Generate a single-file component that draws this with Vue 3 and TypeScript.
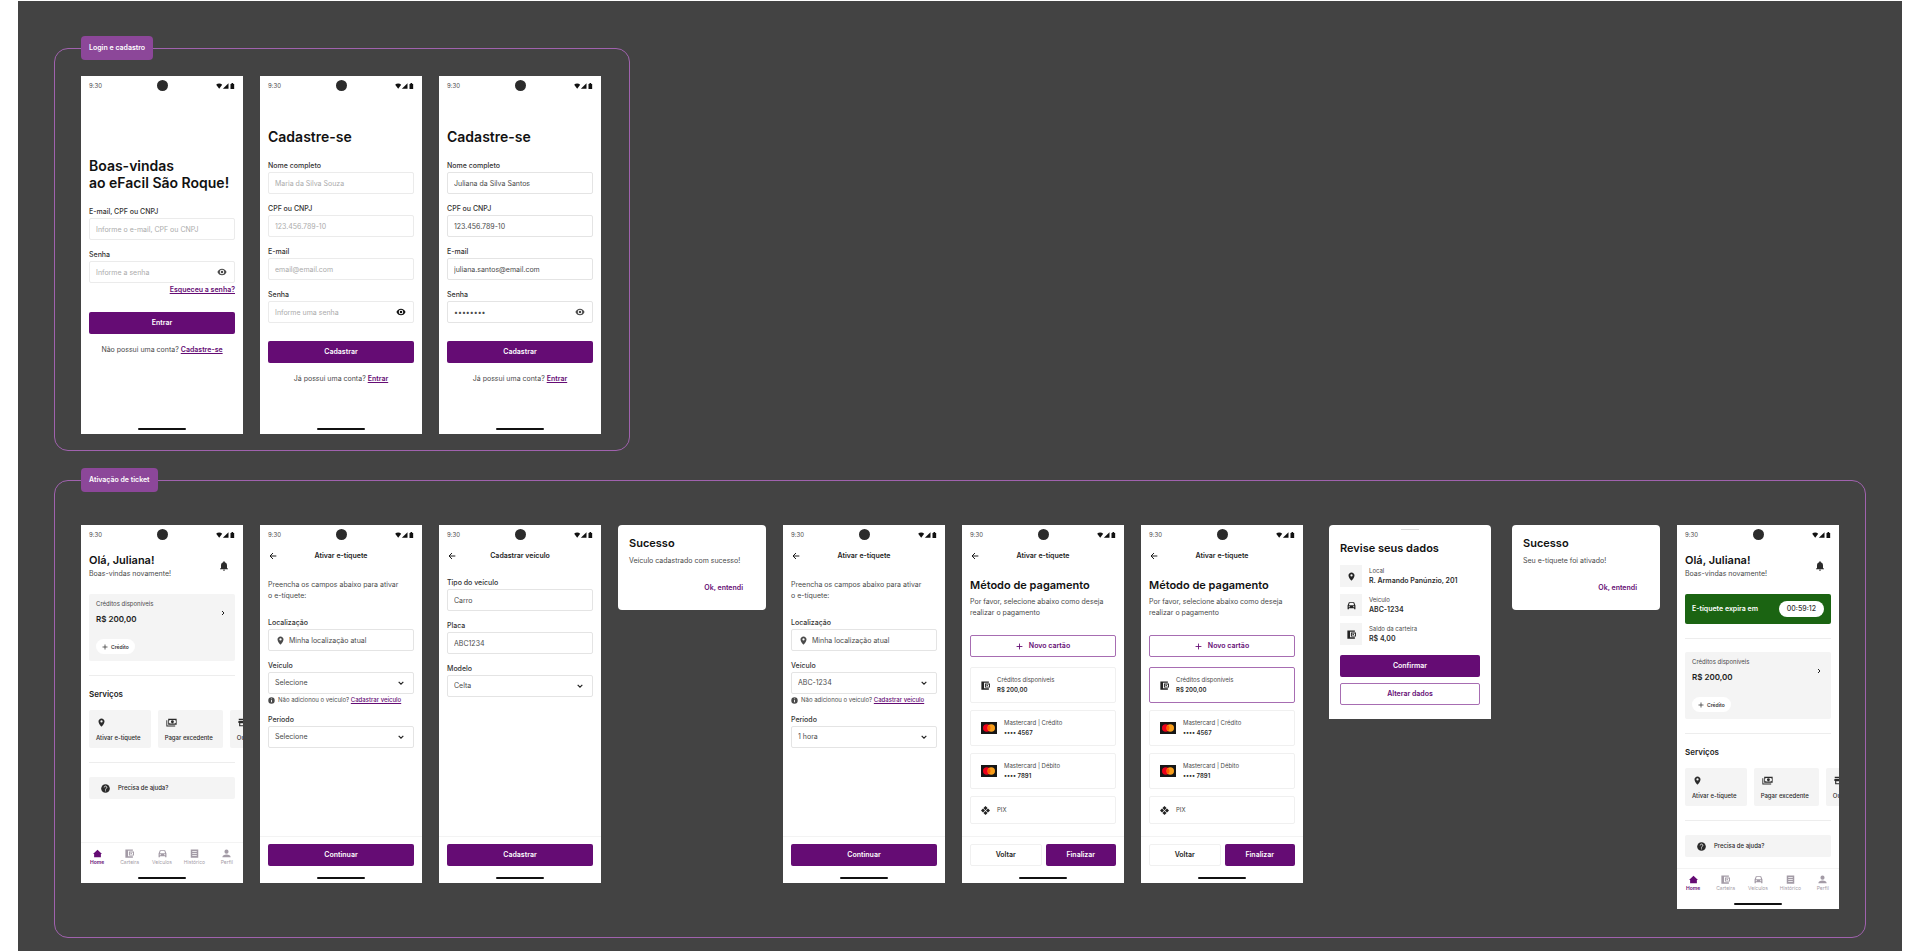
<script setup lang="ts">
interface Field {
  label: string
  value?: string
  placeholder?: string
  kind?: 'text' | 'password' | 'select'
  icon?: string
  hint?: boolean
  soft?: boolean
  darkEye?: boolean
}

interface Auth {
  lines: string[]
  fields: Field[]
  forgot?: boolean
  action: string
  question: string
  link: string
}

interface Screen {
  kind: 'auth' | 'home' | 'form' | 'payment' | 'dialog' | 'sheet'
  title?: string
  intro?: string[]
  fields?: Field[]
  action?: string
  auth?: Auth
  message?: string
  timer?: string
  selected?: boolean
}

interface Group {
  name: string
  size: 'narrow' | 'wide'
  screens: Screen[]
}

const location: Field = { label: 'Localização', value: 'Minha localização atual', icon: 'pin' }
const intro = ['Preencha os campos abaixo para ativar', 'o e-tíquete:']

const groups: Group[] = [
  {
    name: 'Login e cadastro',
    size: 'narrow',
    screens: [
      {
        kind: 'auth',
        auth: {
          lines: ['Boas-vindas', 'ao eFacil São Roque!'],
          fields: [
            { label: 'E-mail, CPF ou CNPJ', placeholder: 'Informe o e-mail, CPF ou CNPJ', soft: true },
            { label: 'Senha', placeholder: 'Informe a senha', kind: 'password', soft: true },
          ],
          forgot: true,
          action: 'Entrar',
          question: 'Não possui uma conta?',
          link: 'Cadastre-se',
        },
      },
      {
        kind: 'auth',
        auth: {
          lines: ['Cadastre-se'],
          fields: [
            { label: 'Nome completo', placeholder: 'Maria da Silva Souza', soft: true },
            { label: 'CPF ou CNPJ', placeholder: '123.456.789-10', soft: true },
            { label: 'E-mail', placeholder: 'email@email.com', soft: true },
            { label: 'Senha', placeholder: 'Informe uma senha', kind: 'password', soft: true, darkEye: true },
          ],
          action: 'Cadastrar',
          question: 'Já possui uma conta?',
          link: 'Entrar',
        },
      },
      {
        kind: 'auth',
        auth: {
          lines: ['Cadastre-se'],
          fields: [
            { label: 'Nome completo', value: 'Juliana da Silva Santos' },
            { label: 'CPF ou CNPJ', value: '123.456.789-10' },
            { label: 'E-mail', value: 'juliana.santos@email.com' },
            { label: 'Senha', value: 'saoroque', kind: 'password' },
          ],
          action: 'Cadastrar',
          question: 'Já possui uma conta?',
          link: 'Entrar',
        },
      },
    ],
  },
  {
    name: 'Ativação de ticket',
    size: 'wide',
    screens: [
      { kind: 'home' },
      {
        kind: 'form',
        title: 'Ativar e-tíquete',
        intro,
        fields: [
          location,
          { label: 'Veículo', value: 'Selecione', kind: 'select', hint: true },
          { label: 'Período', value: 'Selecione', kind: 'select' },
        ],
        action: 'Continuar',
      },
      {
        kind: 'form',
        title: 'Cadastrar veículo',
        fields: [
          { label: 'Tipo do veículo', value: 'Carro' },
          { label: 'Placa', value: 'ABC1234' },
          { label: 'Modelo', value: 'Celta', kind: 'select' },
        ],
        action: 'Cadastrar',
      },
      { kind: 'dialog', title: 'Sucesso', message: 'Veículo cadastrado com sucesso!' },
      {
        kind: 'form',
        title: 'Ativar e-tíquete',
        intro,
        fields: [
          location,
          { label: 'Veículo', value: 'ABC-1234', kind: 'select', hint: true },
          { label: 'Período', value: '1 hora', kind: 'select' },
        ],
        action: 'Continuar',
      },
      { kind: 'payment', title: 'Ativar e-tíquete' },
      { kind: 'payment', title: 'Ativar e-tíquete', selected: true },
      { kind: 'sheet', title: 'Revise seus dados' },
      { kind: 'dialog', title: 'Sucesso', message: 'Seu e-tíquete foi ativado!' },
      { kind: 'home', timer: '00:59:12' },
    ],
  },
]

const services = [
  { icon: 'pin', label: 'Ativar e-tíquete' },
  { icon: 'cash', label: 'Pagar excedente' },
  { icon: 'store', label: 'Outros' },
]

const tabs = [
  { icon: 'home', label: 'Home' },
  { icon: 'wallet', label: 'Carteira' },
  { icon: 'car', label: 'Veículos' },
  { icon: 'receipt', label: 'Histórico' },
  { icon: 'person', label: 'Perfil' },
]

const methods = [
  { icon: 'wallet', name: 'Créditos disponíveis', detail: 'R$ 200,00' },
  { icon: 'mastercard', name: 'Mastercard | Crédito', detail: '•••• 4567' },
  { icon: 'mastercard', name: 'Mastercard | Débito', detail: '•••• 7891' },
  { icon: 'pix', name: 'PIX', detail: '' },
]

const review = [
  { icon: 'pin', name: 'Local', detail: 'R. Armando Panúnzio, 201' },
  { icon: 'car', name: 'Veículo', detail: 'ABC-1234' },
  { icon: 'wallet', name: 'Saldo da carteira', detail: 'R$ 4,00' },
]

const isPhone = (s: Screen) => s.kind !== 'dialog' && s.kind !== 'sheet'
const fieldsOf = (s: Screen): Field[] => s.auth?.fields ?? s.fields ?? []
</script>

<template>
  <svg class="sprite" aria-hidden="true">
    <symbol id="eye" viewBox="0 0 24 24"><path d="M12 4C7 4 2.700 7.300 1 12c1.700 4.700 6 8 11 8s9.300-3.300 11-8c-1.700-4.700-6-8-11-8zm0 13.500a5.500 5.500 0 1 1 0-11 5.500 5.500 0 0 1 0 11zm0-8.500a3 3 0 1 0 0 6 3 3 0 0 0 0-6z" fill-rule="evenodd" /></symbol>
    <symbol id="pin" viewBox="0 0 24 24"><path d="M12 1C7.600 1 4 4.600 4 9c0 6 8 14 8 14s8-8 8-14c0-4.400-3.600-8-8-8zm0 11a3 3 0 1 1 0-6 3 3 0 0 1 0 6z" fill-rule="evenodd" /></symbol>
    <symbol id="chevron-down" viewBox="0 0 24 24"><path d="M5 8.500l7 7 7-7" fill="none" stroke="currentColor" stroke-width="3.500" /></symbol>
    <symbol id="chevron-right" viewBox="0 0 24 24"><path d="M8 4l8 8-8 8" fill="none" stroke="currentColor" stroke-width="4" /></symbol>
    <symbol id="back" viewBox="0 0 24 24"><path d="M22 12H4M12 3l-9 9 9 9" fill="none" stroke="currentColor" stroke-width="3" /></symbol>
    <symbol id="plus" viewBox="0 0 24 24"><path d="M12 2v20M2 12h20" fill="none" stroke="currentColor" stroke-width="3" /></symbol>
    <symbol id="bell" viewBox="0 0 20 24"><path d="M10 24a2.600 2.600 0 0 0 2.600-2.600H7.400A2.600 2.600 0 0 0 10 24zm7.500-7V10.500c0-3.900-2.100-6.800-5.500-7.700V2a2 2 0 0 0-4 0v.8C4.600 3.700 2.500 6.600 2.500 10.500V17L0 19v1h20v-1z" /></symbol>
    <symbol id="info" viewBox="0 0 24 24"><path d="M12 1a11 11 0 1 0 0 22 11 11 0 0 0 0-22zm1.500 17h-3v-8h3zm0-10h-3V5h3z" fill-rule="evenodd" /></symbol>
    <symbol id="help" viewBox="0 0 24 24"><circle cx="12" cy="12" r="11.500" /><path d="M8.500 9a3.500 3.500 0 1 1 5.500 3c-1.300.9-2 1.400-2 3M12 17v2.500" fill="none" stroke="#fff" stroke-width="2.200" /></symbol>
    <symbol id="cash" viewBox="0 0 30 24"><path d="M6 2h23v16H6zm4 3a3 3 0 0 1-2 2v6a3 3 0 0 1 2 2h15a3 3 0 0 1 2-2V7a3 3 0 0 1-2-2zM17.500 6a4 4 0 1 1 0 8 4 4 0 0 1 0-8z" fill-rule="evenodd" /><path d="M1 6h2.500v14.500H25V23H1z" /></symbol>
    <symbol id="store" viewBox="0 0 24 24"><path d="M2 2h20v4H2zM1 8h22v5h-2v9H3v-9H1zm5 6v5h8v-5z" fill-rule="evenodd" /></symbol>
    <symbol id="home" viewBox="0 0 24 24"><path d="M12 2L0 13h3v9h18v-9h3z" /></symbol>
    <symbol id="wallet" viewBox="0 0 24 24"><path d="M1 1h20v3.500H8v15h13V23H1z" /><path d="M10.500 6.500H24v11H10.500zM13 9v6h8.500V9z" fill-rule="evenodd" /><circle cx="16.500" cy="12" r="2" /></symbol>
    <symbol id="car" viewBox="0 0 24 24"><path d="M5 3h14l3.500 9v10H19v-3H5v3H1.500V12zM7 5.500L5 11h14l-2-5.500zM6 13.500a1.600 1.600 0 1 0 0 3.200 1.600 1.600 0 0 0 0-3.200zm12 0a1.600 1.600 0 1 0 0 3.200 1.600 1.600 0 0 0 0-3.200z" fill-rule="evenodd" /></symbol>
    <symbol id="receipt" viewBox="0 0 24 24"><path d="M2 1h20v22H2zm4 5v2h12V6zm0 5v2h12v-2zm0 5v2h12v-2z" fill-rule="evenodd" /></symbol>
    <symbol id="person" viewBox="0 0 24 24"><circle cx="12" cy="7" r="5.500" /><path d="M1 22c0-5 5-7.500 11-7.500S23 17 23 22z" /></symbol>
    <symbol id="pix" viewBox="0 0 24 24"><path d="M12 0l5.500 5.500L12 11 6.500 5.500zM12 13l5.500 5.500L12 24l-5.500-5.500zM5.300 6.700l5.400 5.300-5.400 5.300L0 12zM18.700 6.700L24 12l-5.300 5.300-5.400-5.300z" /></symbol>
    <symbol id="mastercard" viewBox="0 0 32 24"><rect width="32" height="24" fill="#161616" /><circle cx="11.500" cy="12" r="7.500" fill="#eb001b" /><circle cx="20.500" cy="12" r="7.500" fill="#f79e1b" /><path d="M16 6a7.500 7.500 0 0 1 0 12 7.500 7.500 0 0 1 0-12z" fill="#ff5f00" /></symbol>
    <symbol id="signals" viewBox="0 0 56 18"><path d="M9 17L0 5C5 0 13 0 18 5z" /><path d="M37 1v16H20z" /><path d="M43 3h3V0h5v3h3v15H43z" /></symbol>
  </svg>

  <main class="page">
    <div class="board">
      <section v-for="(group, g) in groups" :key="group.name" class="group" :class="group.size">
        <h2 class="tag">{{ group.name }}</h2>
        <div class="screens">
          <article
            v-for="(screen, s) in group.screens"
            :key="s"
            class="screen"
            :class="[screen.kind, { phone: isPhone(screen) }]"
          >
            <header v-if="isPhone(screen)" class="status">
              <span class="clock">9:30</span>
              <span class="camera"></span>
              <svg class="signals"><use href="#signals" /></svg>
            </header>

            <div v-if="screen.kind === 'form' || screen.kind === 'payment'" class="appbar">
              <button class="icon-button" type="button" aria-label="Voltar">
                <svg class="i8"><use href="#back" /></svg>
              </button>
              <h3>{{ screen.title }}</h3>
            </div>

            <form
              v-if="screen.kind === 'auth' || screen.kind === 'form'"
              class="content"
              :class="{ tall: screen.auth?.forgot, plain: screen.kind === 'form' && !screen.intro }"
              @submit.prevent
            >
              <h1 v-if="screen.auth" class="headline">
                <span v-for="line in screen.auth.lines" :key="line">{{ line }}</span>
              </h1>
              <p v-if="screen.intro" class="copy">
                <span v-for="line in screen.intro" :key="line">{{ line }}</span>
              </p>

              <div class="fields">
                <div v-for="(field, f) in fieldsOf(screen)" :key="field.label" class="field">
                  <label :for="`f-${g}-${s}-${f}`">{{ field.label }}</label>
                  <div class="box" :class="{ soft: field.soft }">
                    <svg v-if="field.icon" class="i9 lead"><use :href="`#${field.icon}`" /></svg>
                    <select v-if="field.kind === 'select'" :id="`f-${g}-${s}-${f}`">
                      <option>{{ field.value }}</option>
                    </select>
                    <input
                      v-else
                      :id="`f-${g}-${s}-${f}`"
                      :type="field.kind ?? 'text'"
                      :value="field.value"
                      :placeholder="field.placeholder"
                      autocomplete="off"
                    />
                    <svg v-if="field.kind === 'select'" class="i8 arrow"><use href="#chevron-down" /></svg>
                    <button
                      v-if="field.kind === 'password'"
                      class="icon-button eye"
                      :class="{ dark: field.darkEye }"
                      type="button"
                      aria-label="Mostrar senha"
                    >
                      <svg class="i10"><use href="#eye" /></svg>
                    </button>
                  </div>
                  <p v-if="field.hint" class="hint">
                    <svg class="i7"><use href="#info" /></svg>
                    <span>Não adicionou o veículo? <a href="#cadastrar">Cadastrar veículo</a></span>
                  </p>
                </div>
              </div>

              <a v-if="screen.auth?.forgot" class="forgot" href="#senha">Esqueceu a senha?</a>
              <template v-if="screen.auth">
                <button class="btn solid submit" type="submit">{{ screen.auth.action }}</button>
                <p class="switch">
                  {{ screen.auth.question }} <a href="#conta">{{ screen.auth.link }}</a>
                </p>
              </template>
            </form>

            <div v-if="screen.kind === 'home'" class="content">
              <div class="greeting">
                <div>
                  <h3 class="title">Olá, Juliana!</h3>
                  <p>Boas-vindas novamente!</p>
                </div>
                <button class="icon-button" type="button" aria-label="Notificações">
                  <svg class="bell"><use href="#bell" /></svg>
                </button>
              </div>
              <template v-if="screen.timer">
                <div class="expiry">
                  <span>E-tíquete expira em</span>
                  <time>{{ screen.timer }}</time>
                </div>
                <hr class="above" />
              </template>
              <div class="credit">
                <div>
                  <p class="small">Créditos disponíveis</p>
                  <p class="amount">R$ 200,00</p>
                  <button class="pill" type="button">
                    <svg class="i6"><use href="#plus" /></svg>Crédito
                  </button>
                </div>
                <svg class="i6 go"><use href="#chevron-right" /></svg>
              </div>
              <hr />
              <h4>Serviços</h4>
              <div class="services">
                <button v-for="service in services" :key="service.label" class="service" type="button">
                  <svg :class="service.icon === 'cash' ? 'wide-icon' : 'i9'"><use :href="`#${service.icon}`" /></svg>
                  <span>{{ service.label }}</span>
                </button>
              </div>
              <hr />
              <button class="assist" type="button">
                <svg class="i9"><use href="#help" /></svg>Precisa de ajuda?
              </button>
            </div>

            <nav v-if="screen.kind === 'home'" class="tabs">
              <a v-for="(tab, t) in tabs" :key="tab.label" :href="`#${tab.label}`" :class="{ active: t === 0 }">
                <svg class="i9"><use :href="`#${tab.icon}`" /></svg>
                <span>{{ tab.label }}</span>
              </a>
            </nav>

            <div v-if="screen.kind === 'payment'" class="content">
              <h3 class="title">Método de pagamento</h3>
              <p class="copy lead-in">
                <span>Por favor, selecione abaixo como deseja</span>
                <span>realizar o pagamento</span>
              </p>
              <button class="btn outline" type="button">
                <svg class="i7"><use href="#plus" /></svg>Novo cartão
              </button>
              <div class="methods">
                <button
                  v-for="(method, m) in methods"
                  :key="method.name"
                  class="method"
                  :class="{ chosen: screen.selected && m === 0, short: !method.detail }"
                  type="button"
                >
                  <svg :class="method.icon === 'mastercard' ? 'brand' : 'i9'"><use :href="`#${method.icon}`" /></svg>
                  <span class="lines">
                    <span>{{ method.name }}</span>
                    <b v-if="method.detail">{{ method.detail }}</b>
                  </span>
                </button>
              </div>
            </div>

            <footer v-if="screen.kind === 'form'" class="actions">
              <button class="btn solid" type="button">{{ screen.action }}</button>
            </footer>
            <footer v-if="screen.kind === 'payment'" class="actions">
              <button class="btn ghost" type="button">Voltar</button>
              <button class="btn solid" type="button">Finalizar</button>
            </footer>

            <div v-if="isPhone(screen)" class="home-indicator"><span></span></div>

            <template v-if="screen.kind === 'dialog'">
              <h3 class="title">{{ screen.title }}</h3>
              <p class="message">{{ screen.message }}</p>
              <button class="text-button" type="button">Ok, entendi</button>
            </template>

            <template v-if="screen.kind === 'sheet'">
              <span class="handle"></span>
              <h3 class="title">{{ screen.title }}</h3>
              <ul class="review">
                <li v-for="item in review" :key="item.name">
                  <span class="tile"><svg class="i9"><use :href="`#${item.icon}`" /></svg></span>
                  <span class="lines">
                    <span>{{ item.name }}</span>
                    <b>{{ item.detail }}</b>
                  </span>
                </li>
              </ul>
              <button class="btn solid" type="button">Confirmar</button>
              <button class="btn outline second" type="button">Alterar dados</button>
            </template>
          </article>
        </div>
      </section>
    </div>
  </main>
</template>

<style>
body {
  margin: 0;
  background: #fff;
}
</style>

<style scoped>
.page,
.page * {
  box-sizing: border-box;
}

h1,
h2,
h3,
h4,
p,
ul {
  margin: 0;
  padding: 0;
}

button,
input,
select {
  margin: 0;
  padding: 0;
  border: 0;
  background: none;
  font: inherit;
  color: inherit;
}

button,
a {
  cursor: pointer;
}

a {
  color: var(--purple);
  text-decoration: underline;
  text-underline-offset: 1px;
  text-decoration-thickness: 1px;
}

svg {
  display: block;
  flex: none;
  fill: currentColor;
}

hr {
  height: 1px;
  margin: 14px 0 0;
  border: 0;
  background: #ededed;
}

.sprite {
  position: absolute;
  width: 0;
  height: 0;
}

.page {
  --purple: #650c74;
  --ink: #1d1d1d;
  --text: #4a4a4a;
  --line: #ebebeb;
  display: flex;
  min-height: 100vh;
  padding: 1px 18px 0;
  font-family: Inter, "Liberation Sans", sans-serif;
  font-size: 7px;
  line-height: 10px;
  color: var(--text);
}

.i6 { width: 6px; height: 6px; }
.i7 { width: 7px; height: 7px; }
.i8 { width: 8px; height: 8px; }
.i9 { width: 9px; height: 9px; }
.i10 { width: 10px; height: 10px; }

.board {
  flex: 1;
  display: flex;
  flex-direction: column;
  align-items: flex-start;
  gap: 29px;
  padding: 47px 36px 12px;
  background: #434343;
}

.group {
  position: relative;
  border: 1px solid #a062ae;
  border-radius: 14px;
  padding: 27px 26px 16px;
}

.narrow {
  width: 30vw;
  padding-right: 28px;
}

.wide {
  width: 100%;
  padding-top: 44px;
  padding-bottom: 28px;
}

.tag {
  position: absolute;
  top: -13px;
  left: 26px;
  padding: 7px 8px;
  border-radius: 4px;
  background: #8c4799;
  color: #fff;
  font-size: 7px;
  font-weight: 600;
  line-height: 10px;
}

.screens {
  display: grid;
  align-items: start;
  column-gap: 17px;
}

.narrow .screens {
  grid-template-columns: repeat(3, minmax(0, 1fr));
}

.wide .screens {
  grid-template-columns:
    repeat(3, minmax(0, 162fr)) minmax(0, 148fr) repeat(3, minmax(0, 162fr))
    minmax(0, 175fr) minmax(0, 148fr) minmax(0, 162fr);
}

.screen {
  min-width: 0;
  display: flex;
  flex-direction: column;
  background: #fff;
}

.phone {
  min-height: 358px;
  overflow: hidden;
}

.status {
  display: grid;
  grid-template-columns: 1fr auto 1fr;
  align-items: center;
  height: 19px;
  padding: 0 8px;
}

.clock {
  font-size: 6px;
}

.camera {
  width: 11px;
  height: 11px;
  border-radius: 50%;
  background: #2b2b2b;
}

.signals {
  justify-self: end;
  width: 19px;
  height: 6px;
  color: #111;
}

.content {
  padding: 0 8px;
}

.auth .content {
  padding-top: 33px;
}

.auth .tall {
  padding-top: 62px;
}

.headline {
  font-size: 14px;
  font-weight: 600;
  line-height: 17px;
  color: #111;
  white-space: nowrap;
}

.headline span,
.copy span {
  display: block;
}

.title {
  font-size: 11px;
  font-weight: 600;
  line-height: 14px;
  color: #111;
  white-space: nowrap;
}

.fields {
  display: grid;
  gap: 10px;
}

.auth .fields {
  margin-top: 16px;
}

.copy + .fields {
  margin-top: 17px;
}

.field label {
  display: block;
  margin-bottom: 1px;
  color: #333;
  font-weight: 500;
}

.box {
  display: flex;
  align-items: center;
  height: 22px;
  padding: 0 7px 0 6px;
  border: 1px solid #e4e4e4;
  border-radius: 2px;
}

.soft {
  border-color: var(--line);
}

.box input,
.box select {
  flex: 1;
  min-width: 0;
  height: 20px;
  appearance: none;
  outline-offset: -1px;
}

.box input::placeholder {
  color: #ababab;
  opacity: 1;
}

.lead {
  margin: 0 4px 0 1px;
}

.arrow {
  margin-right: 1px;
  color: #222;
  pointer-events: none;
}

.eye.dark {
  color: #111;
}

.hint {
  display: flex;
  align-items: center;
  gap: 3px;
  margin-top: 1px;
  font-size: 6px;
  line-height: 10px;
  white-space: nowrap;
}

.switch a,
.forgot {
  font-weight: 600;
}

.hint a {
  font-weight: 500;
}

.forgot {
  display: block;
  width: fit-content;
  margin: 2px 0 0 auto;
}

.btn {
  display: flex;
  align-items: center;
  justify-content: center;
  gap: 6px;
  width: 100%;
  height: 22px;
  border-radius: 2px;
  font-weight: 600;
}

.solid {
  background: var(--purple);
  color: #fff;
}

.outline {
  border: 1px solid #a76db2;
  color: var(--purple);
}

.ghost {
  border: 1px solid #f0f0f0;
  color: var(--ink);
}

.submit {
  margin-top: 18px;
}

.forgot + .submit {
  margin-top: 17px;
}

.switch {
  margin-top: 11px;
  text-align: center;
}

.home-indicator {
  display: flex;
  align-items: flex-end;
  justify-content: center;
  height: 17px;
  padding-bottom: 4px;
}

.home-indicator span {
  width: 48px;
  height: 2px;
  border-radius: 1px;
  background: #111;
}

.auth .home-indicator {
  margin-top: auto;
}

.appbar {
  display: grid;
  grid-template-columns: 8px 1fr 8px;
  align-items: center;
  height: 23px;
  padding: 0 9px;
  color: var(--ink);
}

.appbar h3 {
  font-size: 7px;
  font-weight: 600;
  text-align: center;
}

.copy {
  line-height: 11px;
  white-space: nowrap;
}

.form .content {
  padding-top: 12px;
}

.form .plain {
  padding-top: 11px;
}

.actions,
.tabs {
  display: flex;
  gap: 4px;
  margin-top: auto;
  border-top: 1px solid #f3f3f3;
  padding: 7px 8px 0;
}

.greeting {
  display: flex;
  align-items: center;
  justify-content: space-between;
  padding: 9px 7px 0 0;
}

.greeting p {
  margin-top: 2px;
}

.bell {
  width: 8px;
  height: 10px;
  color: #2b2b2b;
}

.expiry {
  display: flex;
  align-items: center;
  justify-content: space-between;
  height: 30px;
  margin-top: 15px;
  padding: 0 7px;
  border-radius: 2px;
  background: #1b6412;
  color: #fff;
  font-weight: 600;
}

.expiry time {
  padding: 3px 8px;
  border-radius: 8px;
  background: #fff;
  color: #333;
  font-weight: 500;
}

.credit {
  display: flex;
  justify-content: space-between;
  margin-top: 15px;
  padding: 6px 9px 7px 7px;
  border-radius: 2px;
  background: #f4f4f4;
}

.above + .credit {
  margin-top: 13px;
}

.small {
  font-size: 6px;
  line-height: 8px;
}

.amount {
  margin: 6px 0 14px;
  font-size: 8px;
  font-weight: 600;
  line-height: 11px;
  color: var(--ink);
}

.pill {
  display: flex;
  align-items: center;
  gap: 3px;
  height: 15px;
  padding: 0 6px;
  border-radius: 8px;
  background: #fff;
  color: #333;
  font-size: 5px;
  font-weight: 600;
}

.go {
  margin-top: 10px;
  color: #222;
}

h4 {
  margin: 13px 0 10px;
  font-size: 8px;
  font-weight: 600;
  line-height: 11px;
  color: var(--ink);
}

.services {
  display: flex;
  gap: 7px;
}

.service {
  flex: none;
  height: 38px;
  padding: 8px 10px 6px 7px;
  border-radius: 2px;
  background: #f4f4f4;
  color: #2b2b2b;
  font-size: 6px;
  font-weight: 500;
  line-height: 8px;
  text-align: left;
}

.service svg {
  margin: 0 0 7px 1px;
}

.wide-icon {
  width: 11px;
  height: 9px;
}

.assist {
  display: flex;
  align-items: center;
  gap: 8px;
  width: 100%;
  height: 22px;
  margin: 14px 0 11px;
  padding: 0 12px;
  border-radius: 2px;
  background: #f4f4f4;
  color: #2b2b2b;
  font-size: 6px;
  font-weight: 500;
}

.tabs {
  gap: 0;
  padding: 6px 0 0;
}

.tabs a {
  flex: 1 1 0;
  min-width: 0;
  display: flex;
  flex-direction: column;
  align-items: center;
  font-size: 5px;
  line-height: 8px;
  color: #a39ba6;
  text-decoration: none;
}

.tabs .active {
  color: var(--purple);
  font-weight: 600;
}

.payment .content {
  padding-top: 11px;
}

.lead-in {
  margin: 4px 0 17px;
}

.methods {
  display: grid;
  gap: 7px;
  margin-top: 10px;
}

.method {
  display: flex;
  align-items: center;
  gap: 7px;
  height: 36px;
  padding: 0 10px;
  border: 1px solid #f0f0f0;
  border-radius: 2px;
  text-align: left;
  font-size: 6px;
}

.short {
  height: 28px;
}

.chosen {
  border-color: #a76db2;
}

.method svg,
.tile svg {
  color: #222;
}

.brand {
  width: 16px;
  height: 12px;
}

.lines span,
.lines b {
  display: block;
}

.lines b {
  color: #2b2b2b;
  font-weight: 600;
}

.dialog {
  min-height: 85px;
  padding: 11px;
  border-radius: 4px;
}

.message {
  margin-top: 6px;
}

.text-button {
  align-self: flex-end;
  margin: 17px 12px 0 0;
  color: var(--purple);
  font-weight: 600;
}

.sheet {
  margin: 0 4px 0 9px;
  padding: 4px 11px 14px;
  border-radius: 4px 4px 0 0;
}

.handle {
  align-self: center;
  width: 18px;
  height: 1px;
  margin-bottom: 11px;
  background: #dcdcdc;
}

.review {
  display: grid;
  gap: 7px;
  margin: 10px 0;
  list-style: none;
}

.review li {
  display: flex;
  align-items: center;
  gap: 7px;
}

.tile {
  display: grid;
  place-items: center;
  width: 22px;
  height: 22px;
  background: #f4f4f4;
}

.review .lines > span {
  font-size: 6px;
}

.second {
  margin-top: 6px;
}
</style>
